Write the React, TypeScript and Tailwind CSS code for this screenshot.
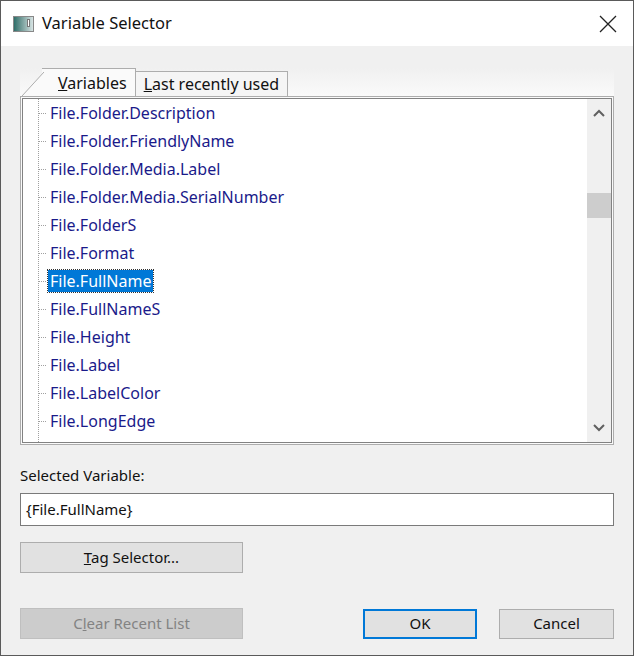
import React from "react";

const items = [
  "File.Folder.Description",
  "File.Folder.FriendlyName",
  "File.Folder.Media.Label",
  "File.Folder.Media.SerialNumber",
  "File.FolderS",
  "File.Format",
  "File.FullName",
  "File.FullNameS",
  "File.Height",
  "File.Label",
  "File.LabelColor",
  "File.LongEdge",
];

const font = { fontFamily: '"Noto Sans", "Open Sans", sans-serif' };

export default function App() {
  return (
    <div className="w-[634px] h-[656px] bg-[#f0f0f0] border border-[#5a5a5a] flex flex-col relative text-[#000]" style={font}>
      <div className="h-[45px] bg-white flex items-center pl-[12px] shrink-0">
        <div className="w-[21px] h-[16px] border border-[#888] bg-gradient-to-r from-[#2e6f6a] to-[#d8e4e4] mr-[8px] flex justify-end">
          <div className="w-[3px] h-[8px] bg-white mt-[2px] mr-[3px] border border-[#777]" />
        </div>
        <span className="text-[16.5px] text-[#111]">Variable Selector</span>
        <div className="ml-auto mr-[16px]">
          <svg width="18" height="18" viewBox="0 0 18 18"><path d="M1 1 L17 17 M17 1 L1 17" stroke="#222" strokeWidth="1.3" /></svg>
        </div>
      </div>
      <div className="px-[19px] pt-[22px] flex flex-col">
        <div className="flex items-end h-[28px] bg-gradient-to-b from-[#f0f0f0] to-[#fafafa] pl-[2px]">
          <div className="relative h-[28px] flex items-end">
            <svg width="22" height="28" className="absolute left-0 bottom-0"><path d="M0 28 L22 4 L22 28 Z" fill="#fafafa" /><path d="M0 28 L22 4" stroke="#adadad" /></svg>
            <div className="ml-[20px] h-[28px] bg-[#fafafa] border-t border-r border-[#adadad] flex items-center pl-[16px] pr-[8px] text-[16px] text-[#111]">
              <span><u>V</u>ariables</span>
            </div>
          </div>
          <div className="h-[25px] border-t border-r border-[#adadad] bg-[#f5f5f5] flex items-center px-[8px] text-[16px] text-[#111]">
            <span><u>L</u>ast recently used</span>
          </div>
        </div>
        <div className="h-[349px] border border-[#adadad] p-[1px] bg-[#fafafa]">
          <div className="h-full border border-[#828282] bg-white flex overflow-hidden">
            <div className="flex-1 relative overflow-hidden">
              <div className="absolute left-[15px] top-0 bottom-0 border-l border-dotted border-[#a0a0a0]" />
              <div className="flex flex-col">
                {items.map((t) => (
                  <div key={t} className="h-[28px] flex items-center">
                    <div className="w-[8px] ml-[15px] border-t border-dotted border-[#a0a0a0] mr-[2px]" />
                    <span
                      className={
                        t === "File.FullName"
                          ? "text-[16px] px-[2px] bg-[#0078d7] text-white outline outline-1 outline-dotted outline-[#333] leading-[22px]"
                          : "text-[16px] px-[2px] text-[#1a1a8a] leading-[22px]"
                      }
                    >
                      {t}
                    </span>
                  </div>
                ))}
              </div>
            </div>
            <div className="w-[24px] bg-[#f0f0f0] flex flex-col items-center shrink-0">
              <svg width="14" height="24" viewBox="0 0 14 24" className="mt-[2px]"><path d="M2 15 L7 10 L12 15" stroke="#606060" strokeWidth="2" fill="none" /></svg>
              <div className="w-[24px] h-[25px] bg-[#cdcdcd] mt-[68px]" />
              <div className="flex-1" />
              <svg width="14" height="24" viewBox="0 0 14 24" className="mb-[2px]"><path d="M2 9 L7 14 L12 9" stroke="#606060" strokeWidth="2" fill="none" /></svg>
            </div>
          </div>
        </div>
        <div className="mt-[20px] text-[15px] text-[#111] leading-[20px]">Selected Variable:</div>
        <div className="mt-[8px] h-[33px] bg-white border border-[#7a7a7a] flex items-center px-[5px] text-[15px] text-[#111]">{"{File.FullName}"}</div>
        <button className="mt-[16px] w-[223px] h-[31px] bg-[#e1e1e1] border border-[#adadad] text-[15px] text-[#111]"><u>T</u>ag Selector...</button>
        <div className="mt-[35px] flex items-center">
          <button className="w-[223px] h-[31px] bg-[#cccccc] border border-[#bfbfbf] text-[15px] text-[#838383]">C<u>l</u>ear Recent List</button>
          <button className="ml-auto w-[114px] h-[30px] bg-[#e1e1e1] border-2 border-[#0078d7] text-[15px] text-[#111]">OK</button>
          <button className="ml-[22px] w-[115px] h-[30px] bg-[#e1e1e1] border border-[#adadad] text-[15px] text-[#111]">Cancel</button>
        </div>
      </div>
    </div>
  );
}
